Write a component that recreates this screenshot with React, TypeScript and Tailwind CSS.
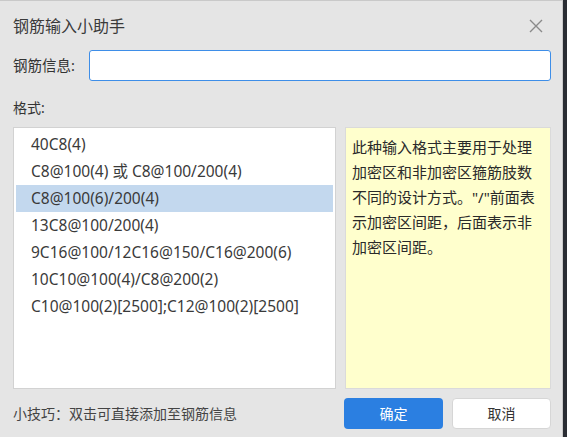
import { useState } from "react";

const formats = [
	"40C8(4)",
	"C8@100(4) 或 C8@100/200(4)",
	"C8@100(6)/200(4)",
	"13C8@100/200(4)",
	"9C16@100/12C16@150/C16@200(6)",
	"10C10@100(4)/C8@200(2)",
	"C10@100(2)[2500];C12@100(2)[2500]",
];

const font = {
	fontFamily: '"Noto Sans", "Noto Sans CJK SC", sans-serif',
};

const RebarHelper = () => {
	const [selected, setSelected] = useState(2);
	const [value, setValue] = useState("");

	return (
		<div
			className="flex h-[437px] w-[567px] bg-[#2a2d33] text-[#333]"
			style={font}
		>
			<div className="flex w-[563px] flex-col border-t border-r border-[#c9c9c9] bg-[#e5e5e5] pl-[13px] pr-[11px]">
				<div className="flex h-[49px] items-center justify-between">
					<span className="text-[16px] text-[#3a3a3a]">钢筋输入小助手</span>
					<svg width="14" height="14" viewBox="0 0 14 14" className="mr-[8px]">
						<path
							d="M1 1L13 13M13 1L1 13"
							stroke="#8a8a8a"
							strokeWidth="1.4"
						/>
					</svg>
				</div>
				<div className="flex h-[31px] items-center">
					<span className="w-[76px] text-[14.5px]">钢筋信息:</span>
					<input
						value={value}
						onChange={(e) => setValue(e.target.value)}
						className="h-[31px] flex-1 rounded-[3px] border border-[#3e8ee8] bg-white px-2 text-[14px] outline-none"
					/>
				</div>
				<div className="mt-[17px] h-[20px] text-[14px] leading-[20px]">格式:</div>
				<div className="mt-[9px] flex h-[262px] gap-[9px]">
					<ul className="w-[323px] border border-[#d2d2d2] bg-white px-[2px] pt-[3px]">
						{formats.map((f, i) => (
							<li
								key={f}
								onClick={() => setSelected(i)}
								className={`flex h-[27px] items-center pl-[15px] text-[15.5px] text-[#3a3a3a] ${
									selected === i ? "bg-[#c3d8ee]" : ""
								}`}
							>
								{f}
							</li>
						))}
					</ul>
					<div className="flex-1 border border-[#dadada] bg-[#ffffcd] pl-[6px] pt-[7px] pr-[4px]">
						<p className="w-[186px] text-[15px] leading-[25px] text-[#2a2a2a]">
							此种输入格式主要用于处理加密区和非加密区箍筋肢数不同的设计方式。"/"前面表示加密区间距，后面表示非加密区间距。
						</p>
					</div>
				</div>
				<div className="mt-[9px] flex h-[31px] items-center">
					<span className="flex-1 text-[14px] text-[#444]">
						小技巧：双击可直接添加至钢筋信息
					</span>
					<button className="h-[31px] w-[99px] rounded-[4px] bg-[#2b7fe1] text-[14px] text-white">
						确定
					</button>
					<button className="ml-[9px] h-[31px] w-[99px] rounded-[4px] border border-[#d6d6d6] bg-white text-[14px] text-[#333]">
						取消
					</button>
				</div>
			</div>
			<div className="flex-1" />
		</div>
	);
};

export default function App() {
	return <RebarHelper />;
}
